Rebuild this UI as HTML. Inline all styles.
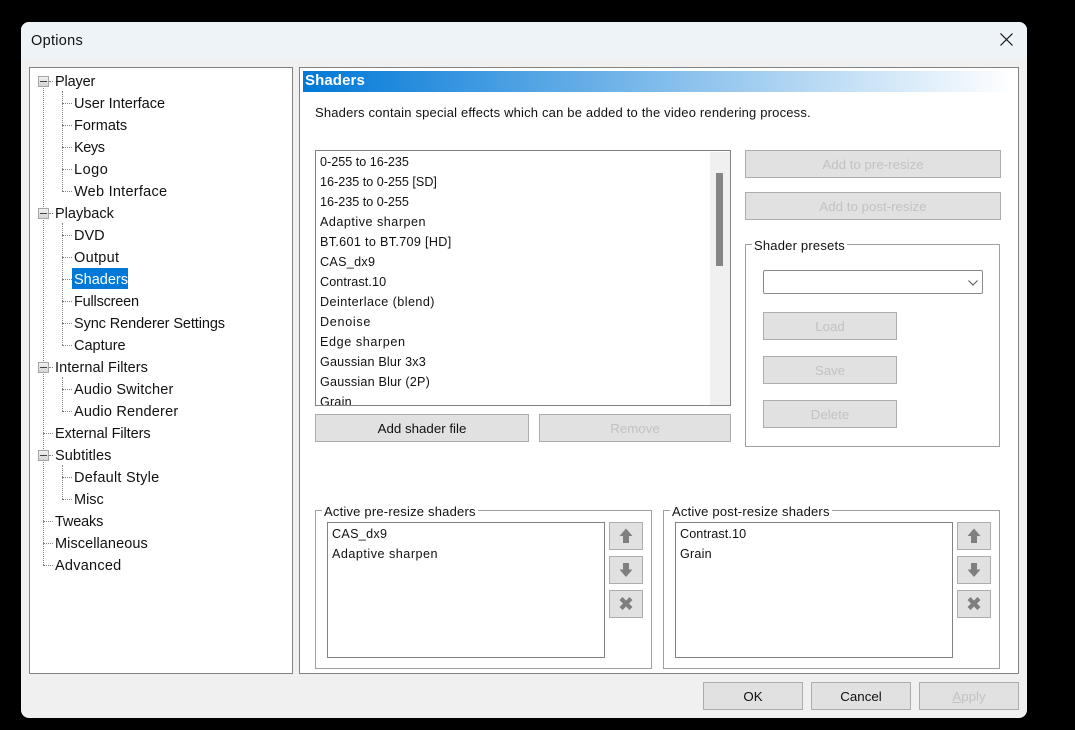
<!DOCTYPE html>
<html><head><meta charset="utf-8"><style>
html,body{margin:0;padding:0;background:#000;width:1075px;height:730px;overflow:hidden}
body{position:relative;font-family:"Liberation Sans",sans-serif;color:#111}
div,span{position:absolute;box-sizing:border-box}
.t{white-space:nowrap;font-size:14.5px;line-height:20px;height:20px;margin-top:2px}
.l{white-space:nowrap;font-size:12.6px;line-height:20px;height:20px}
.b{background:#e1e1e1;border:1px solid #adadad;text-align:center;font-size:13.3px;white-space:nowrap;color:#111;line-height:28px}
.d{color:#c2c2c2}
.box{background:#fff;border:1px solid #828282}
.g{border:1px solid #a0a0a0}
.gl{background:#fff;font-size:13px;line-height:14px;white-space:nowrap;padding:0 2px;letter-spacing:.2px;margin-top:1px}
.h{border-top:1px dotted #808080;height:1px}
.v{border-left:1px dotted #808080;width:1px}
.pm{width:11px;height:11px;left:38px;background:linear-gradient(#f0f0f0,#d4d4d4);border:1px solid #a5a5a5}
.pm:after{content:"";position:absolute;left:1px;right:1px;top:4px;height:1px;background:#444}
</style></head><body>
<div style="left:21px;top:22px;width:1006px;height:696px;background:#f0f0f0;border-radius:8px;overflow:hidden">
<div style="left:0;top:0;width:100%;height:37px;background:#eef3f8"></div>
</div>
<span style="left:31px;top:31px;font-size:14.5px;line-height:20px;white-space:nowrap;letter-spacing:.3px">Options</span>
<svg style="position:absolute;left:999.500px;top:33px" width="13" height="13" viewBox="0 0 13 13"><path d="M.5.5L12.500 12.500M12.500.5L.5 12.500" stroke="#111" stroke-width="1.200" fill="none"/></svg>

<div class="box" style="left:29px;top:67px;width:264px;height:607px"></div>
<div class="v" style="left:43px;top:88px;height:477px"></div>
<div class="h" style="left:43px;top:565px;width:10px"></div>
<div class="h" style="left:43px;top:543px;width:10px"></div>
<div class="h" style="left:43px;top:521px;width:10px"></div>
<div class="h" style="left:43px;top:433px;width:10px"></div>
<div class="h" style="left:49px;top:81px;width:4px"></div>
<div class="h" style="left:49px;top:213px;width:4px"></div>
<div class="h" style="left:49px;top:367px;width:4px"></div>
<div class="h" style="left:49px;top:455px;width:4px"></div>
<div class="v" style="left:62px;top:91px;height:100px"></div>
<div class="v" style="left:62px;top:223px;height:122px"></div>
<div class="v" style="left:62px;top:377px;height:34px"></div>
<div class="v" style="left:62px;top:465px;height:34px"></div>
<div class="h" style="left:62px;top:103px;width:10px"></div>
<div class="h" style="left:62px;top:125px;width:10px"></div>
<div class="h" style="left:62px;top:147px;width:10px"></div>
<div class="h" style="left:62px;top:169px;width:10px"></div>
<div class="h" style="left:62px;top:191px;width:10px"></div>
<div class="h" style="left:62px;top:235px;width:10px"></div>
<div class="h" style="left:62px;top:257px;width:10px"></div>
<div class="h" style="left:62px;top:279px;width:10px"></div>
<div class="h" style="left:62px;top:301px;width:10px"></div>
<div class="h" style="left:62px;top:323px;width:10px"></div>
<div class="h" style="left:62px;top:345px;width:10px"></div>
<div class="h" style="left:62px;top:389px;width:10px"></div>
<div class="h" style="left:62px;top:411px;width:10px"></div>
<div class="h" style="left:62px;top:477px;width:10px"></div>
<div class="h" style="left:62px;top:499px;width:10px"></div>
<div class="pm" style="top:76px"></div>
<div class="pm" style="top:208px"></div>
<div class="pm" style="top:362px"></div>
<div class="pm" style="top:450px"></div>

<span class="t" style="left:55px;top:70px;letter-spacing:-.15px">Player</span>
<span class="t" style="left:74px;top:92px">User Interface</span>
<span class="t" style="left:74px;top:114px">Formats</span>
<span class="t" style="left:74px;top:136px;letter-spacing:-.4px">Keys</span>
<span class="t" style="left:74px;top:158px;letter-spacing:.5px">Logo</span>
<span class="t" style="left:74px;top:180px;letter-spacing:.25px">Web Interface</span>
<span class="t" style="left:55px;top:202px">Playback</span>
<span class="t" style="left:74px;top:224px">DVD</span>
<span class="t" style="left:74px;top:246px;letter-spacing:.3px">Output</span>
<div style="left:72px;top:268px;width:56px;height:21px;background:#0078d7"></div>
<span class="t" style="left:74px;top:268px;color:#fff">Shaders</span>
<span class="t" style="left:74px;top:290px;letter-spacing:-.2px">Fullscreen</span>
<span class="t" style="left:74px;top:312px;letter-spacing:-.1px">Sync Renderer Settings</span>
<span class="t" style="left:74px;top:334px">Capture</span>
<span class="t" style="left:55px;top:356px;letter-spacing:.07px">Internal Filters</span>
<span class="t" style="left:74px;top:378px;letter-spacing:.2px">Audio Switcher</span>
<span class="t" style="left:74px;top:400px;letter-spacing:.2px">Audio Renderer</span>
<span class="t" style="left:55px;top:422px;letter-spacing:-.07px">External Filters</span>
<span class="t" style="left:55px;top:444px;letter-spacing:.1px">Subtitles</span>
<span class="t" style="left:74px;top:466px;letter-spacing:.25px">Default Style</span>
<span class="t" style="left:74px;top:488px">Misc</span>
<span class="t" style="left:55px;top:510px;letter-spacing:-.15px">Tweaks</span>
<span class="t" style="left:55px;top:532px;letter-spacing:.07px">Miscellaneous</span>
<span class="t" style="left:55px;top:554px;letter-spacing:.25px">Advanced</span>

<div class="box" style="left:299px;top:67px;width:720px;height:607px"></div>
<div style="left:303px;top:71px;width:710px;height:21px;background:linear-gradient(90deg,#0078d7,#fff)"></div>
<span style="left:305px;top:72px;font-size:15px;font-weight:bold;line-height:18px;color:#fff;white-space:nowrap;letter-spacing:.1px">Shaders</span>
<span style="left:315px;top:103px;font-size:13px;line-height:20px;white-space:nowrap;letter-spacing:.18px">Shaders contain special effects which can be added to the video rendering process.</span>

<div class="box" style="left:315px;top:150px;width:416px;height:256px;overflow:hidden">
<div style="left:394px;top:1px;width:20px;height:253px;background:#f0f0f0"></div>
<div style="left:400px;top:22px;width:7px;height:93px;background:#858585"></div>
<span class="l" style="left:4px;top:1px">0-255 to 16-235</span>
<span class="l" style="left:4px;top:21px">16-235 to 0-255 [SD]</span>
<span class="l" style="left:4px;top:41px">16-235 to 0-255</span>
<span class="l" style="left:4px;top:61px;letter-spacing:.5px">Adaptive sharpen</span>
<span class="l" style="left:4px;top:81px;letter-spacing:.33px">BT.601 to BT.709 [HD]</span>
<span class="l" style="left:4px;top:101px;letter-spacing:.3px">CAS_dx9</span>
<span class="l" style="left:4px;top:121px;letter-spacing:.1px">Contrast.10</span>
<span class="l" style="left:4px;top:141px;letter-spacing:.45px">Deinterlace (blend)</span>
<span class="l" style="left:4px;top:161px;letter-spacing:.7px">Denoise</span>
<span class="l" style="left:4px;top:181px;letter-spacing:.6px">Edge sharpen</span>
<span class="l" style="left:4px;top:201px;letter-spacing:.18px">Gaussian Blur 3x3</span>
<span class="l" style="left:4px;top:221px;letter-spacing:.2px">Gaussian Blur (2P)</span>
<span class="l" style="left:4px;top:241px;letter-spacing:.2px">Grain</span>
</div>

<div class="b" style="left:315px;top:414px;width:214px;height:28px">Add shader file</div>
<div class="b d" style="left:539px;top:414px;width:192px;height:28px">Remove</div>
<div class="b d" style="left:745px;top:150px;width:256px;height:28px">Add to pre-resize</div>
<div class="b d" style="left:745px;top:192px;width:256px;height:28px">Add to post-resize</div>

<div class="g" style="left:745px;top:244px;width:255px;height:203px"></div>
<span class="gl" style="left:752px;top:238px">Shader presets</span>
<div style="left:763px;top:270px;width:220px;height:24px;background:#fff;border:1px solid #8a8a8a;border-radius:2px"></div>
<svg style="position:absolute;left:968px;top:280px" width="10" height="6" viewBox="0 0 10 6"><path d="M.5.5L5 5 9.500.5" stroke="#555" fill="none"/></svg>
<div class="b d" style="left:763px;top:312px;width:134px;height:28px">Load</div>
<div class="b d" style="left:763px;top:356px;width:134px;height:28px">Save</div>
<div class="b d" style="left:763px;top:400px;width:134px;height:28px">Delete</div>

<div class="g" style="left:315px;top:510px;width:337px;height:159px"></div>
<span class="gl" style="left:322px;top:504px">Active pre-resize shaders</span>
<div class="box" style="left:327px;top:522px;width:278px;height:136px"></div>
<span class="l" style="left:332px;top:524px;letter-spacing:.3px">CAS_dx9</span>
<span class="l" style="left:332px;top:544px;letter-spacing:.5px">Adaptive sharpen</span>

<div class="g" style="left:663px;top:510px;width:337px;height:159px"></div>
<span class="gl" style="left:670px;top:504px">Active post-resize shaders</span>
<div class="box" style="left:675px;top:522px;width:278px;height:136px"></div>
<span class="l" style="left:680px;top:524px;letter-spacing:.1px">Contrast.10</span>
<span class="l" style="left:680px;top:544px;letter-spacing:.2px">Grain</span>

<div class="b" style="left:609px;top:522px;width:34px;height:28px"></div>
<div class="b" style="left:609px;top:556px;width:34px;height:28px"></div>
<div class="b" style="left:609px;top:590px;width:34px;height:28px"></div>
<div class="b" style="left:957px;top:522px;width:34px;height:28px"></div>
<div class="b" style="left:957px;top:556px;width:34px;height:28px"></div>
<div class="b" style="left:957px;top:590px;width:34px;height:28px"></div>
<svg style="position:absolute;left:0;top:0" width="1075" height="730" fill="#7f7f7f">
<path d="M626 528.500l6.500 7.500h-3.500v7h-6v-7h-3.500z"/>
<path d="M626 577l6.500-7.500h-3.500v-6.500h-6v6.500h-3.500z"/>
<path d="M619.500 600l3-3 3.500 3.500 3.500-3.500 3 3-3.500 3.500 3.500 3.500-3 3-3.500-3.500-3.500 3.500-3-3 3.500-3.500z"/>
<path d="M974 528.500l6.500 7.500h-3.500v7h-6v-7h-3.500z"/>
<path d="M974 577l6.500-7.500h-3.500v-6.500h-6v6.500h-3.500z"/>
<path d="M967.500 600l3-3 3.500 3.500 3.500-3.500 3 3-3.500 3.500 3.500 3.500-3 3-3.500-3.500-3.500 3.500-3-3 3.500-3.500z"/>
</svg>

<div class="b" style="left:703px;top:682px;width:100px;height:28px;line-height:27px">OK</div>
<div class="b" style="left:811px;top:682px;width:100px;height:28px;line-height:27px">Cancel</div>
<div class="b d" style="left:919px;top:682px;width:100px;height:28px;line-height:27px"><u>A</u>pply</div>
</body></html>
